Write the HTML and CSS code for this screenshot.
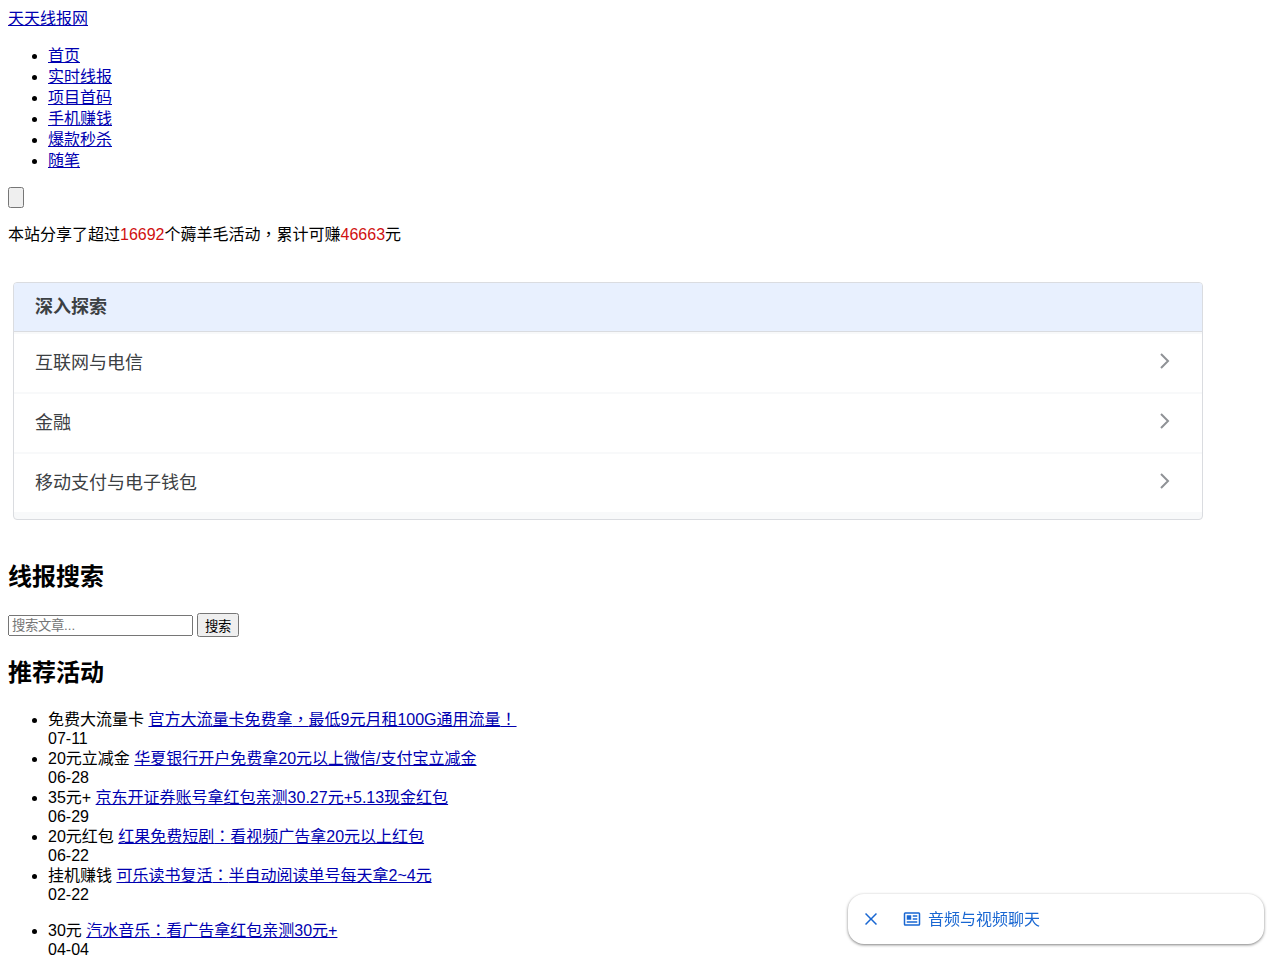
FILE: index.html
```html
<!DOCTYPE html>
<html lang="zh-CN">
<head>
    <meta charset="UTF-8">
    <meta name="viewport" content="width=device-width, initial-scale=1.0">
    <title>天天线报网</title>
    <link rel="stylesheet" href="styles.css">
</head>
<body>
    <header>
        <a href="#">天天线报网</a>
        <nav>
            <ul class="menu">
                <li><a href="#">首页</a></li>
                <li><a href="#">实时线报</a></li>
                <li><a href="#">项目首码</a></li>
                <li><a href="#">手机赚钱</a></li>
                <li><a href="#">爆款秒杀</a></li>
                <li><a href="#">随笔</a></li>
            </ul>
        </nav>
        <button class="menu-toggle" type="button" aria-label="菜单"></button>
    </header>

    <p class="stats">本站分享了超过<span class="num">16692</span>个薅羊毛活动<span class="mark" lang="zh-Hant">，</span>累计可赚<span class="num">46663</span>元</p>

    <!-- Related topics -->
    <section class="explore">
        <h3 class="explore-title">深入探索</h3>
        <a class="explore-item" href="#">互联网与电信
            <svg class="arrow" viewBox="0 0 10 16"><path d="M1 1l7 7-7 7"/></svg>
        </a>
        <a class="explore-item" href="#">金融
            <svg class="arrow" viewBox="0 0 10 16"><path d="M1 1l7 7-7 7"/></svg>
        </a>
        <a class="explore-item" href="#">移动支付与电子钱包
            <svg class="arrow" viewBox="0 0 10 16"><path d="M1 1l7 7-7 7"/></svg>
        </a>
    </section>

    <h2>线报搜索</h2>
    <form class="search">
        <input type="text" name="q" placeholder="搜索文章..." aria-label="搜索文章">
        <button type="submit">搜索</button>
    </form>

    <h2>推荐活动</h2>
    <ul class="posts">
        <li>免费大流量卡 <a href="#">官方大流量卡免费拿<span class="mark" lang="zh-Hant">，</span>最低9元月租100G通用流量<span class="mark" lang="zh-Hant">！</span></a><div class="date">07-11</div></li>
        <li>20元立减金 <a href="#">华夏银行开户免费拿20元以上微信/支付宝立减金</a><div class="date">06-28</div></li>
        <li>35元+ <a href="#">京东开证券账号拿红包亲测30.27元+5.13现金红包</a><div class="date">06-29</div></li>
        <li>20元红包 <a href="#">红果免费短剧<span class="mark" lang="zh-Hant">：</span>看视频广告拿20元以上红包</a><div class="date">06-22</div></li>
        <li>挂机赚钱 <a href="#">可乐读书复活<span class="mark" lang="zh-Hant">：</span>半自动阅读单号每天拿2~4元</a><div class="date">02-22</div></li>
    </ul>
    <ul class="posts">
        <li>30元 <a href="#">汽水音乐<span class="mark" lang="zh-Hant">：</span>看广告拿红包亲测30元+</a><div class="date">04-04</div></li>
    </ul>

    <!-- Floating bar -->
    <aside class="float-bar">
        <button class="close" type="button" aria-label="关闭">
            <svg viewBox="0 0 24 24"><path d="M20 5.4L18.6 4 12 10.6 5.4 4 4 5.4 10.6 12 4 18.6 5.4 20 12 13.4 18.6 20 20 18.6 13.4 12z"/></svg>
        </button>
        <a class="float-link" href="#">
            <svg viewBox="0 0 24 24"><path fill-rule="evenodd" d="M3 3h18a2 2 0 0 1 2 2v14a2 2 0 0 1-2 2H3a2 2 0 0 1-2-2V5a2 2 0 0 1 2-2zm0 2v14h18V5zM5 7h6v6H5zM13 7h6v2h-6zM13 11h6v2h-6zM5 15h14v2H5z"/></svg>
            音频与视频聊天
        </a>
    </aside>
</body>
</html>
```
FILE: styles.css
```css
body {
    margin: 8px;
    font-family: "Liberation Sans", "Noto Sans CJK SC", sans-serif;
    font-size: 16px;
    line-height: 21px;
    color: #000;
    background-color: #fff;
}

a {
    color: #0000b0;
}

/* Centered punctuation */
.mark {
    font-family: "Noto Sans CJK TC", sans-serif;
    line-height: 1;
}

.menu {
    margin: 16px 0;
}

.menu-toggle {
    display: block;
    width: 16px;
    height: 21px;
}

.stats {
    margin: 16px 0;
}

.num {
    color: #d01010;
}

/* Related topics */
.explore {
    margin: 37px 69px 41px 5px;
    padding-bottom: 7px;
    border: 1px solid #dadce0;
    border-radius: 4px;
    background-color: #f8f9fa;
    overflow: hidden;
}

.explore-title {
    margin: 0;
    padding: 0 21px;
    font-size: 18px;
    line-height: 48px;
    color: #3c4043;
    background-color: #e8f0fe;
    border-bottom: 1px solid #dadce0;
}

.explore-item {
    display: flex;
    align-items: center;
    justify-content: space-between;
    margin-top: 2px;
    padding: 0 32px 0 21px;
    font-size: 18px;
    line-height: 58px;
    color: #3c4043;
    text-decoration: none;
    background-color: #fff;
}

.arrow {
    width: 10px;
    height: 16px;
    margin-bottom: 4px;
    fill: none;
    stroke: #8f9296;
    stroke-width: 2;
}

h2 {
    margin: 20px 0;
    font-size: 24px;
    line-height: 32px;
}

.search {
    display: flex;
    align-items: center;
    gap: 4px;
}

.search button {
    height: 24px;
}

.posts {
    margin: 16px 0;
}

.date {
    line-height: 18px;
}

/* Floating bar */
.float-bar {
    position: fixed;
    right: 16px;
    bottom: 16px;
    display: flex;
    align-items: center;
    width: 416px;
    height: 50px;
    border-radius: 16px;
    background-color: #fff;
    box-shadow: 0 1px 3px rgba(0, 0, 0, 0.5);
}

.float-bar svg {
    width: 18px;
    height: 18px;
    fill: #1967d2;
}

.close {
    display: flex;
    padding: 0 14px;
    border: none;
    background: none;
}

.float-link {
    display: flex;
    align-items: center;
    gap: 7px;
    margin-left: 9px;
    color: #1967d2;
    text-decoration: none;
}
```
